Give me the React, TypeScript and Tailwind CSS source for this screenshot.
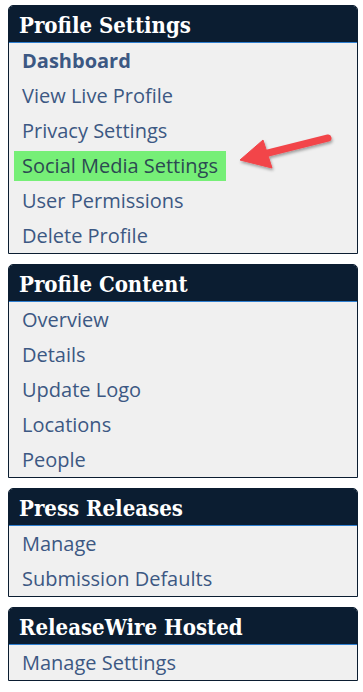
const sections: { title: string; items: string[] }[] = [
  {
    title: "Profile Settings",
    items: [
      "Dashboard",
      "View Live Profile",
      "Privacy Settings",
      "Social Media Settings",
      "User Permissions",
      "Delete Profile",
    ],
  },
  {
    title: "Profile Content",
    items: ["Overview", "Details", "Update Logo", "Locations", "People"],
  },
  {
    title: "Press Releases",
    items: ["Manage", "Submission Defaults"],
  },
  {
    title: "ReleaseWire Hosted",
    items: ["Manage Settings"],
  },
];

function Arrow() {
  return (
    <svg
      className="absolute left-[223px] top-[-16px] pointer-events-none"
      width="110"
      height="48"
      viewBox="0 0 110 48"
    >
      <defs>
        <filter id="sh" x="-20%" y="-30%" width="140%" height="160%">
          <feDropShadow dx="1" dy="2" stdDeviation="1.5" floodColor="#000" floodOpacity="0.35" />
        </filter>
      </defs>
      <g filter="url(#sh)" fill="#f2454a" stroke="#f2454a">
        <line x1="36" y1="21" x2="96" y2="6" strokeWidth="7" strokeLinecap="round" />
        <polygon points="8,28 31,8 40,36" strokeWidth="1" strokeLinejoin="round" />
      </g>
    </svg>
  );
}

function Panel({ title, items }: { title: string; items: string[] }) {
  return (
    <div className="border border-[#0b1d31] rounded-t-[5px] overflow-hidden">
      <div className="bg-[#0b1d31] h-[37px] pl-[10px] pt-[5px] border-b border-[#2f7fd0]">
        <span
          className="text-white font-bold text-[22px] leading-[28px]"
          style={{ fontFamily: '"DejaVu Serif Condensed", "DejaVu Serif", serif' }}
        >
          {title}
        </span>
      </div>
      <div className="bg-[#f0f0f0]">
        {items.map((item) => (
          <div key={item} className="relative h-[35px] flex items-center pl-[5px]">
            {item === "Social Media Settings" ? (
              <>
                <span className="bg-[#76ef77] h-[30px] px-[8px] flex items-center text-[#2c4a52]">
                  {item}
                </span>
                <Arrow />
              </>
            ) : (
              <span
                className={`px-[8px] text-[#3c5883] ${
                  item === "Dashboard" ? "font-bold" : ""
                }`}
              >
                {item}
              </span>
            )}
          </div>
        ))}
      </div>
    </div>
  );
}

export default function App() {
  return (
    <div
      className="bg-white w-[363px] min-h-[692px] pt-[5px] pl-[8px] pr-[5px] flex flex-col gap-[10px] text-[20px]"
      style={{ fontFamily: '"Open Sans", sans-serif' }}
    >
      {sections.map((s) => (
        <Panel key={s.title} title={s.title} items={s.items} />
      ))}
    </div>
  );
}
